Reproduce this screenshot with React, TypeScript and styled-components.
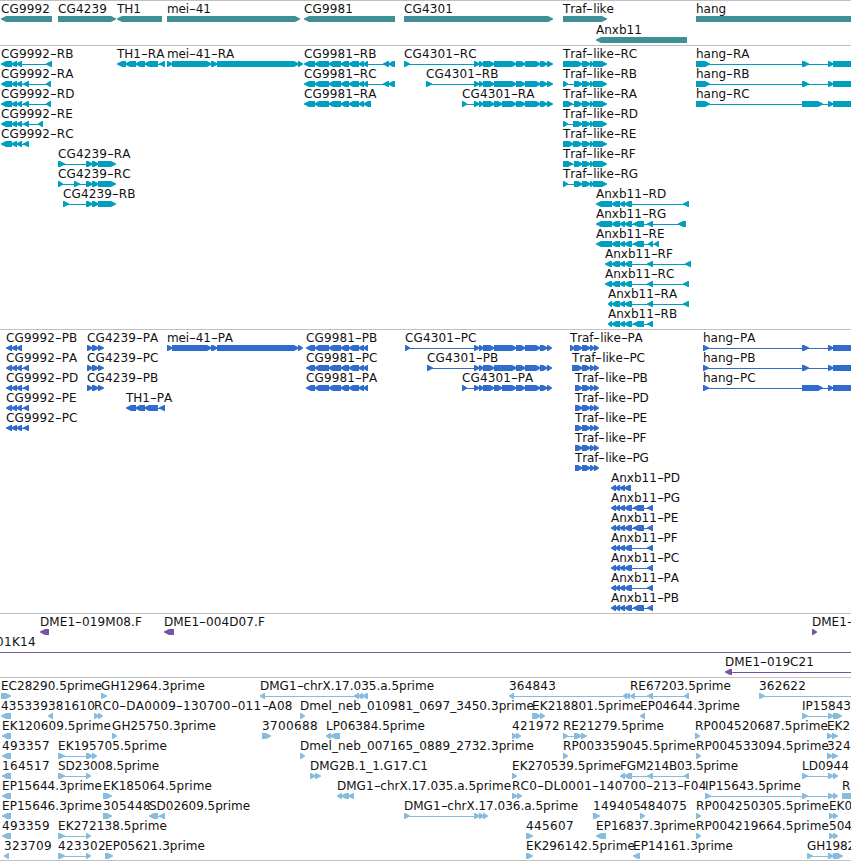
import React from "react";
import styled, { createGlobalStyle } from "styled-components";

const GlobalStyle = createGlobalStyle`
  html, body { margin: 0; padding: 0; background: #fff; overflow: hidden; }
`;

const FONT = '"DejaVu Sans", sans-serif';
const FONT_SIZE = 12;
const DASH_WIDTH = 6.8;

type Span = [number, number];
type Dir = "+" | "-";
interface Feature {
  name: string;
  dir: Dir;
  exons: Span[];
  /** right edge of the label, when it is set tighter or looser than normal */
  end?: number;
  labelX?: number;
  /** the intron line runs on to this position */
  until?: number;
}

const f = (name: string, dir: Dir, exons: Span[], end?: number, until?: number, labelX?: number): Feature => ({
  name, dir, exons, end, until, labelX,
});

const Browser = styled.main`
  display: flex;
  flex-direction: column;
  width: 851px;
  height: 861px;
  overflow: hidden;
  background: #fff;
`;

const TrackPanel = styled.section<{ $bottom: number }>`
  display: flex;
  flex-direction: column;
  flex: none;
  border-top: 1px solid #c0c0c0;
  padding: 1px 0 ${(p) => p.$bottom}px;
`;

const EndRule = styled.div`
  flex: none;
  height: 1px;
  background: #c0c0c0;
`;

const Row = styled.div<{ $height: number }>`
  position: relative;
  flex: none;
  height: ${(p) => p.$height}px;
`;

const Label = styled.span<{ $x: number; $spacing: number }>`
  position: absolute;
  left: ${(p) => p.$x}px;
  top: 0;
  font: ${FONT_SIZE}px/15px ${FONT};
  font-kerning: none;
  letter-spacing: ${(p) => p.$spacing}px;
  color: #111;
  white-space: pre;
`;

const Dash = styled.span`
  display: inline-block;
  width: ${DASH_WIDTH}px;
  letter-spacing: 0;
  transform: scaleX(1.6);
  transform-origin: 0 0;
`;

const Glyph = styled.svg<{ $x: number }>`
  position: absolute;
  left: ${(p) => p.$x}px;
  top: 14px;
  display: block;
`;

const context = document.createElement("canvas").getContext("2d")!;

function labelSpacing(name: string, x: number, end?: number) {
  if (end === undefined) {
    if (name.startsWith("CG")) return 0.12;
    return name.startsWith("Traf") || name.startsWith("mei") ? -0.12 : 0;
  }
  context.font = `${FONT_SIZE}px ${FONT}`;
  const parts = name.split("-");
  const letters = parts.join("");
  const natural = context.measureText(letters).width + (parts.length - 1) * DASH_WIDTH;
  return (end - x - natural) / letters.length;
}

function exonPoints([a, b]: Span, dir: Dir, origin: number) {
  const s = a - origin;
  const e = b - origin;
  const tip = Math.min(e - s, 6);
  return dir === "+"
    ? `${s},0 ${e - tip + 1},0 ${e},2.5 ${e},3.5 ${e - tip + 1},6 ${s},6`
    : `${e},0 ${s + tip - 1},0 ${s},2.5 ${s},3.5 ${s + tip - 1},6 ${e},6`;
}

/* A tip that meets the next exon reaches one pixel into it. */
function joined(exons: Span[], dir: Dir): Span[] {
  return exons.map(([a, b], i) => {
    if (dir === "+") return [a, exons[i + 1]?.[0] === b ? b + 1 : b];
    return [exons[i - 1]?.[1] === a ? a - 1 : a, b];
  });
}

function FeatureView({ item, color }: { item: Feature; color: string }) {
  const start = item.exons.length ? item.exons[0][0] : 0;
  const stop = item.until ?? item.exons[item.exons.length - 1][1];
  const x = item.labelX ?? start;
  const spacing = labelSpacing(item.name, x, item.end);
  const parts = item.name.split("-");
  const inset = item.exons.length ? 1 : 0;
  return (
    <>
      <Label $x={x} $spacing={spacing}>
        {parts.map((part, i) => (
          <React.Fragment key={i}>
            {i > 0 && <Dash>-</Dash>}
            {part}
          </React.Fragment>
        ))}
      </Label>
      <Glyph $x={start} width={stop - start} height={6} fill={color}>
        <rect x={inset} y={3} width={Math.max(stop - start - 2 * inset, 0)} height={1} />
        {joined(item.exons, item.dir).map((exon, i) => (
          <polygon key={i} points={exonPoints(exon, item.dir, start)} />
        ))}
      </Glyph>
    </>
  );
}

interface TrackProps {
  rows: Feature[][];
  color: string;
  rowHeight?: number;
  bottom?: number;
}

function Track({ rows, color, rowHeight = 20, bottom = 2 }: TrackProps) {
  return (
    <TrackPanel $bottom={bottom}>
      {rows.map((row, i) => (
        <Row key={i} $height={rowHeight}>
          {row.map((item, j) => (
            <FeatureView key={j} item={item} color={color} />
          ))}
        </Row>
      ))}
    </TrackPanel>
  );
}

const genes: Feature[][] = [
  [
    f("CG9992", "-", [[1, 52]]),
    f("CG4239", "+", [[58, 116]]),
    f("TH1", "-", [[117, 162]]),
    f("mei-41", "+", [[167, 300]]),
    f("CG9981", "-", [[304, 395]]),
    f("CG4301", "+", [[404, 553]]),
    f("Traf-like", "+", [[563, 607]]),
    f("hang", "+", [[696, 870]]),
  ],
  [f("Anxb11", "-", [[596, 687]])],
];

/* Exon groups shared by several isoforms. */
const cg9992: Span[] = [[12, 17], [17, 22]];
const cg4239: Span[] = [[86, 92], [92, 98], [98, 116]];
const mei: Span[] = [[167, 172], [172, 211], [211, 217], [217, 298], [298, 303]];
const cg9981: Span[] = [[315, 329], [329, 341], [341, 349], [349, 359], [359, 364]];
const cg4301Head: Span[] = [[474, 479], [479, 483], [483, 494]];
const cg4301Tail: Span[] = [[516, 525], [525, 540], [540, 547]];
const cg4301: Span[] = [...cg4301Head, [494, 516], ...cg4301Tail];
const cg4301Split: Span[] = [...cg4301Head, [494, 502], [502, 516], ...cg4301Tail];
const traf: Span[] = [[582, 590], [590, 593], [593, 607]];
const anx: Span[] = [[612, 620], [620, 625], [625, 632]];
const hangTail: Span[] = [[828, 833], [833, 870]];

const trafR = (isoform: string, head: Span[]) => f(`Traf-like-R${isoform}`, "+", [...head, ...traf]);
const anxR = (isoform: string, head: Span, tail: Span[]) => f(`Anxb11-R${isoform}`, "-", [head, ...anx, ...tail]);

const transcripts: Feature[][] = [
  [
    f("CG9992-RB", "-", [[1, 12], ...cg9992, [46, 52]]),
    f("TH1-RA", "-", [[117, 126], [126, 136], [136, 145], [145, 158], [159, 165]]),
    f("mei-41-RA", "+", mei),
    f("CG9981-RB", "-", [[304, 315], ...cg9981, [364, 368], [383, 389], [389, 395]]),
    f("CG4301-RC", "+", [[404, 410], ...cg4301, [547, 553]]),
    trafR("C", [[563, 582]]),
    f("hang-RA", "+", [[696, 710], [802, 809], ...hangTail]),
  ],
  [
    f("CG9992-RA", "-", [[1, 12], ...cg9992, [23, 29], [46, 51]]),
    f("CG9981-RC", "-", [[304, 315], ...cg9981, [364, 368], [383, 389], [389, 395]]),
    f("CG4301-RB", "+", [[426, 432], ...cg4301, [547, 553]]),
    trafR("B", [[563, 568], [574, 582]]),
    f("hang-RB", "+", [[696, 710], [802, 809], ...hangTail]),
  ],
  [
    f("CG9992-RD", "-", [[1, 12], ...cg9992, [23, 29], [46, 51]]),
    f("CG9981-RA", "-", [[304, 315], ...cg9981, [364, 371]]),
    f("CG4301-RA", "+", [[462, 467], ...cg4301Split, [547, 553]]),
    trafR("A", [[563, 573], [574, 582]]),
    f("hang-RC", "+", [[696, 710], [802, 823], ...hangTail]),
  ],
  [f("CG9992-RE", "-", [[1, 12], ...cg9992, [23, 29], [38, 43]]), trafR("D", [[563, 568], [573, 582]])],
  [f("CG9992-RC", "-", [[1, 12], ...cg9992, [23, 29]]), trafR("E", [[563, 573], [573, 582]])],
  [f("CG4239-RA", "+", [[58, 65], ...cg4239]), trafR("F", [[563, 573], [574, 582]])],
  [f("CG4239-RC", "+", [[58, 63], [74, 80], ...cg4239]), trafR("G", [[563, 568], [574, 582]])],
  [f("CG4239-RB", "+", [[63, 69], ...cg4239]), anxR("D", [596, 612], [[683, 689]])],
  [anxR("G", [596, 612], [[633, 644], [647, 653], [678, 686]])],
  [anxR("E", [596, 612], [[633, 644], [648, 653], [654, 659]])],
  [anxR("F", [605, 612], [[647, 653], [685, 691]])],
  [anxR("C", [605, 612], [[647, 653], [683, 689]])],
  [anxR("A", [608, 612], [[647, 653], [683, 689]])],
  [anxR("B", [608, 612], [[633, 644], [647, 653]])],
];

const cg9992P: Span[] = [[6, 12], ...cg9992, [23, 29]];
const cg4239P: Span[] = [[87, 92], [92, 98], [98, 104]];
const cg9981P: Span[] = [[306, 315], ...cg9981, [364, 368]];
const trafP = (isoform: string, head: Span[]) =>
  f(`Traf-like-P${isoform}`, "+", [...head, [582, 590], [590, 594], [594, 599]]);
const anxP = (isoform: string, tail: Span[]) =>
  f(`Anxb11-P${isoform}`, "-", [[611, 616], [616, 620], [620, 625], ...tail]);

const proteins: Feature[][] = [
  [
    f("CG9992-PB", "-", [[6, 12], ...cg9992]),
    f("CG4239-PA", "+", cg4239P),
    f("mei-41-PA", "+", mei),
    f("CG9981-PB", "-", cg9981P),
    f("CG4301-PC", "+", [[405, 410], ...cg4301, [547, 552]]),
    trafP("A", [[570, 574], [574, 582]]),
    f("hang-PA", "+", [[703, 709], [802, 809], ...hangTail]),
  ],
  [
    f("CG9992-PA", "-", cg9992P),
    f("CG4239-PC", "+", cg4239P),
    f("CG9981-PC", "-", cg9981P),
    f("CG4301-PB", "+", [[427, 433], ...cg4301, [547, 552]]),
    trafP("C", [[572, 582]]),
    f("hang-PB", "+", [[703, 709], [802, 809], ...hangTail]),
  ],
  [
    f("CG9992-PD", "-", cg9992P),
    f("CG4239-PB", "+", cg4239P),
    f("CG9981-PA", "-", cg9981P),
    f("CG4301-PA", "+", [[462, 467], ...cg4301Split, [547, 552]]),
    trafP("B", [[575, 582]]),
    f("hang-PC", "+", [[703, 709], [802, 823], ...hangTail]),
  ],
  [
    f("CG9992-PE", "-", cg9992P),
    f("TH1-PA", "-", [[126, 136], [136, 145], [145, 158], [159, 165]]),
    trafP("D", [[575, 582]]),
  ],
  [f("CG9992-PC", "-", cg9992P), trafP("E", [[575, 582]])],
  [trafP("F", [[575, 582]])],
  [trafP("G", [[575, 582]])],
  [anxP("D", [[625, 631]])],
  [anxP("G", [[625, 632], [633, 644], [647, 653]])],
  [anxP("E", [[625, 632], [633, 644], [647, 653]])],
  [anxP("F", [[625, 632], [647, 653]])],
  [anxP("C", [[625, 632], [647, 653]])],
  [anxP("A", [[625, 632], [647, 653]])],
  [anxP("B", [[625, 632], [633, 644], [647, 653]])],
];

const clones: Feature[][] = [
  [
    f("DME1-019M08.F", "-", [[40, 49]], 142),
    f("DME1-004D07.F", "-", [[164, 174]], 265),
    f("DME1-", "+", [[812, 817]]),
  ],
  [f("01K14", "+", [], 36, 853, -4)],
  [f("DME1-019C21", "-", [[725, 732]], 814, 853)],
];

const ests: Feature[][] = [
  [
    f("EC28290.5prime", "+", [[1, 11]], 102),
    f("GH12964.3prime", "+", [[101, 107]], 205),
    f("DMG1-chrX.17.035.a.5prime", "-", [[260, 265], [354, 359], [359, 363], [363, 368]], 434),
    f("364843", "-", [[509, 514], [623, 627], [627, 630]], 556),
    f("RE67203.5prime", "-", [[630, 635], [647, 653], [684, 689]], 731),
    f("362622", "+", [[759, 765]], 806, 853),
  ],
  [
    f("435339", "-", [[1, 11]], 48),
    f("381610", "-", [[48, 53]], 95),
    f("RC0-DA0009-130700-011-A08", "+", [[94, 98], [98, 103]], 292),
    f("Dmel_neb_010981_0697_3450.3prime", "+", [[300, 305]], 534),
    f("EK218801.5prime", "+", [[532, 540], [540, 545]], 641),
    f("EP04644.3prime", "-", [[640, 645]], 740),
    f("IP15843", "+", [[802, 808], [828, 833], [833, 842]], 851),
  ],
  [
    f("EK120609.5prime", "-", [[2, 11]], 111),
    f("GH25750.3prime", "+", [[112, 117]], 216),
    f("3700688", "+", [[262, 271]], 318),
    f("LP06384.5prime", "-", [[326, 331], [331, 340]], 425),
    f("421972", "+", [[512, 516], [516, 521]], 560),
    f("RE21279.5prime", "+", [[563, 568], [574, 581], [581, 587]], 664),
    f("RP004520687.5prime", "+", [[695, 700]], 828),
    f("EK2", "+", [[827, 832], [832, 838]], 850),
  ],
  [
    f("493357", "-", [[2, 11]], 50),
    f("EK195705.5prime", "+", [[58, 65], [86, 92], [92, 97]], 167),
    f("Dmel_neb_007165_0889_2732.3prime", "+", [[300, 305]], 534),
    f("RP003359045.5prime", "+", [[563, 568]], 696),
    f("RP004533094.5prime", "+", [[696, 701]], 829),
    f("324", "+", [[827, 832], [832, 838]], 851),
  ],
  [
    f("164517", "-", [[2, 11]], 50),
    f("SD23008.5prime", "+", [[58, 65], [86, 91]], 159),
    f("DMG2B.1_1.G17.C1", "+", [[310, 315], [315, 321]], 428),
    f("EK270539.5prime", "+", [[512, 517]], 621),
    f("FGM214B03.5prime", "-", [[620, 625], [625, 632], [647, 653], [684, 689]], 738),
    f("LD0944", "+", [[802, 808], [828, 833], [833, 838]], 849),
  ],
  [
    f("EP15644.3prime", "-", [[2, 11]], 102),
    f("EK185064.5prime", "+", [[103, 112]], 212),
    f("DMG1-chrX.17.035.a.5prime", "-", [[337, 342], [342, 349], [349, 354]], 511),
    f("RC0-DL0001-140700-213-F04", "+", [[512, 517], [517, 522]], 706),
    f("IP15643.5prime", "+", [[705, 711], [802, 808], [828, 833], [833, 838]], 801),
    f("R", "+", [[842, 860]]),
  ],
  [
    f("EP15646.3prime", "-", [[2, 11]], 102),
    f("305448", "+", [[103, 112]], 151),
    f("SD02609.5prime", "-", [[149, 158], [159, 165]], 250),
    f("DMG1-chrX.17.036.a.5prime", "+", [[404, 410], [474, 479], [479, 483], [483, 488]], 578),
    f("149405", "+", [[593, 600]], 641),
    f("484075", "+", [[640, 645]], 687),
    f("RP004250305.5prime", "+", [[696, 701]], 829),
    f("EK0", "+", [[829, 833], [833, 838]], 852),
  ],
  [
    f("493359", "-", [[2, 11]], 50),
    f("EK272138.5prime", "+", [[58, 65], [86, 91]], 167),
    f("445607", "+", [[526, 533]], 574),
    f("EP16837.3prime", "-", [[596, 606]], 696),
    f("RP004219664.5prime", "+", [[696, 701]], 829),
    f("504", "+", [[829, 833], [833, 838]], 852),
  ],
  [
    f("323709", "-", [[4, 9]], 52),
    f("423302", "+", [[58, 65], [86, 91]], 106),
    f("EP05621.3prime", "+", [[105, 113]], 205),
    f("EK296142.5prime", "+", [[526, 533]], 635),
    f("EP14161.3prime", "-", [[633, 640]], 733),
    f("GH1982", "+", [[807, 813], [828, 833], [833, 843]], 855),
  ],
];

export default function App() {
  return (
    <>
      <GlobalStyle />
      <Browser>
        <Track rows={genes} color="#3f8f96" rowHeight={21} bottom={1} />
        <Track rows={transcripts} color="#009fbf" />
        <Track rows={proteins} color="#306ccd" />
        <Track rows={clones} color="#7556a6" />
        <Track rows={ests} color="#87bcde" bottom={1} />
        <EndRule />
      </Browser>
    </>
  );
}
